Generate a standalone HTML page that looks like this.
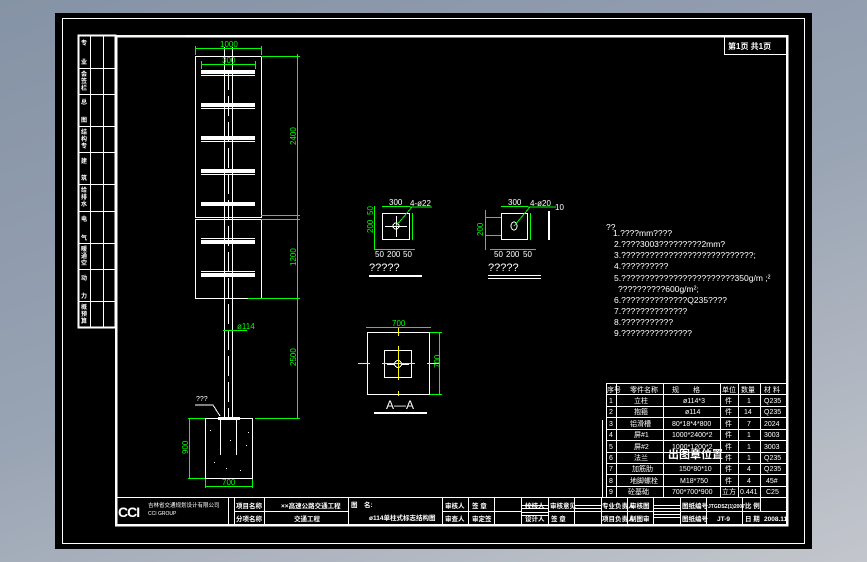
<!DOCTYPE html>
<html><head><meta charset="utf-8"><style>
html,body{margin:0;padding:0;width:867px;height:562px;overflow:hidden;background:linear-gradient(160deg,#8593a6 0%,#98a3b3 50%,#c3c6cc 100%);}
svg{position:absolute;left:0;top:0}
text{font-family:"Liberation Sans","Noto Sans CJK SC",sans-serif;fill:#fff}
.g{stroke:#00ff00;stroke-width:1;fill:none}
.gt{fill:#00ff00;font-size:8px}
.w{stroke:#fff;fill:none;stroke-width:1}
.wt{font-size:7px}
</style></head><body>
<svg width="867" height="562" viewBox="0 0 867 562" shape-rendering="crispEdges">
<rect x="55" y="13" width="757" height="536" fill="#000"/>
<rect x="62.5" y="18.5" width="742" height="525" class="w"/>
<!-- main thick frame -->
<rect x="116" y="36" width="671" height="489" fill="none" stroke="#fff" stroke-width="2.5"/>
<line x1="116" y1="36" x2="185" y2="36" stroke="#f5f0e0" stroke-width="1"/>
<!-- left strip -->
<g class="w">
<rect x="78.5" y="35.5" width="37" height="292" stroke-width="2"/>
<line x1="90.5" y1="35" x2="90.5" y2="328"/><line x1="103.5" y1="35" x2="103.5" y2="328"/>
<line x1="78" y1="68.5" x2="115" y2="68.5"/><line x1="78" y1="94.5" x2="115" y2="94.5"/>
<line x1="78" y1="126.5" x2="115" y2="126.5"/><line x1="78" y1="152.5" x2="115" y2="152.5"/>
<line x1="78" y1="184.5" x2="115" y2="184.5"/><line x1="78" y1="211.5" x2="115" y2="211.5"/>
<line x1="78" y1="243.5" x2="115" y2="243.5"/><line x1="78" y1="269.5" x2="115" y2="269.5"/>
<line x1="78" y1="301.5" x2="115" y2="301.5"/>
</g>
<g font-size="6" font-weight="bold">
<text x="81" y="45">专</text><text x="81" y="64">业</text>
<text x="81" y="76">会</text><text x="81" y="83">签</text><text x="81" y="90">栏</text>
<text x="81" y="104">总</text><text x="81" y="122">图</text>
<text x="81" y="134">结</text><text x="81" y="141">构</text><text x="81" y="148">专</text>
<text x="81" y="163">建</text><text x="81" y="180">筑</text>
<text x="81" y="192">给</text><text x="81" y="199">排</text><text x="81" y="206">水</text>
<text x="81" y="221">电</text><text x="81" y="240">气</text>
<text x="81" y="251">暖</text><text x="81" y="258">通</text><text x="81" y="265">空</text>
<text x="81" y="280">动</text><text x="81" y="298">力</text>
<text x="81" y="309">概</text><text x="81" y="316">预</text><text x="81" y="323">算</text>
</g>
<!-- page box -->
<rect x="724.5" y="36.5" width="62" height="18" class="w" stroke-width="1.5"/>
<text x="728" y="49" font-size="8" font-weight="bold">第1页 共1页</text>

<!-- sign panels -->
<g class="w">
<rect x="195.5" y="56.5" width="66" height="161"/>
<rect x="195.5" y="219.5" width="66" height="79"/>
<line x1="224.5" y1="47" x2="224.5" y2="420"/><line x1="232.5" y1="47" x2="232.5" y2="420"/>
<line x1="228.5" y1="70" x2="228.5" y2="420" stroke-dasharray="20,6"/>
</g>
<g fill="#fff">
<rect x="201" y="70" width="54" height="4"/><rect x="201" y="103" width="54" height="4"/>
<rect x="201" y="136" width="54" height="4"/><rect x="201" y="169" width="54" height="4"/>
<rect x="201" y="202" width="54" height="4"/>
<rect x="201" y="240" width="54" height="4"/><rect x="201" y="273" width="54" height="4"/>
</g>
<g class="w"><line x1="201" y1="75.5" x2="255" y2="75.5"/><line x1="201" y1="108.5" x2="255" y2="108.5"/><line x1="201" y1="141.5" x2="255" y2="141.5"/><line x1="201" y1="174.5" x2="255" y2="174.5"/><line x1="201" y1="238.5" x2="255" y2="238.5"/><line x1="201" y1="271.5" x2="255" y2="271.5"/></g>
<!-- dims on pole -->
<g class="g">
<line x1="195" y1="48.5" x2="262" y2="48.5"/><line x1="195.5" y1="46" x2="195.5" y2="55"/><line x1="261.5" y1="46" x2="261.5" y2="55"/>
<line x1="201" y1="64.5" x2="256" y2="64.5"/><line x1="201.5" y1="61" x2="201.5" y2="69"/><line x1="255.5" y1="61" x2="255.5" y2="69"/>
<line x1="261" y1="56.5" x2="300" y2="56.5"/>
<line x1="297.5" y1="54" x2="297.5" y2="419"/>
<line x1="261" y1="215.5" x2="300" y2="215.5"/><line x1="261" y1="219.5" x2="300" y2="219.5"/>
<line x1="248" y1="298.5" x2="300" y2="298.5"/>
<line x1="255" y1="418.5" x2="300" y2="418.5"/>
<line x1="223" y1="330.5" x2="247" y2="330.5"/>
</g>
<text class="gt" x="220" y="47">1000</text>
<text class="gt" x="222" y="63">300</text>
<text class="gt" x="237" y="329" font-size="7">ø114</text>
<text class="gt" transform="translate(296,145) rotate(-90)">2400</text>
<text class="gt" transform="translate(296,266) rotate(-90)">1200</text>
<text class="gt" transform="translate(296,366) rotate(-90)">2500</text>
<!-- foundation -->
<rect x="205.5" y="418.5" width="47" height="60" class="w"/>
<rect x="218" y="417" width="22" height="3" fill="#fff"/>
<g class="w"><line x1="220.5" y1="420" x2="220.5" y2="455"/><line x1="236.5" y1="420" x2="236.5" y2="455"/><polyline points="195,405 213,405 220,416"/></g>
<text x="196" y="401" font-size="7">???</text>
<g fill="#fff"><rect x="210" y="430" width="1" height="1"/><rect x="230" y="440" width="1" height="1"/><rect x="246" y="445" width="1" height="1"/><rect x="214" y="462" width="1" height="1"/><rect x="226" y="468" width="1" height="1"/><rect x="240" y="470" width="1" height="1"/><rect x="248" y="432" width="1" height="1"/></g>
<g class="g"><line x1="189.5" y1="418" x2="189.5" y2="479"/><line x1="188" y1="418.5" x2="205" y2="418.5"/><line x1="188" y1="478.5" x2="205" y2="478.5"/><line x1="205" y1="486.5" x2="253" y2="486.5"/><line x1="205.5" y1="479" x2="205.5" y2="488"/><line x1="252.5" y1="479" x2="252.5" y2="488"/></g>
<text class="gt" transform="translate(188,454) rotate(-90)" font-size="7">900</text>
<text class="gt" x="222" y="485" font-size="7">700</text>

<!-- plate 1 -->
<rect x="382.5" y="213.5" width="27" height="26" class="w"/>
<g class="w"><line x1="385" y1="226.5" x2="407" y2="226.5"/><line x1="396.5" y1="216" x2="396.5" y2="237"/></g>
<circle cx="396" cy="226" r="3" class="w"/>
<g class="g"><line x1="382" y1="206.5" x2="410" y2="206.5"/><line x1="374.5" y1="206" x2="374.5" y2="250"/><line x1="412.5" y1="213" x2="412.5" y2="240"/><line x1="374" y1="249.5" x2="415" y2="249.5"/><line x1="396" y1="226" x2="412" y2="207"/><line x1="410" y1="207" x2="432" y2="207"/></g>
<g class="gt" font-size="6"><text x="389" y="205">300</text><text x="410" y="206" fill="#fff">4-ø22</text><text x="375" y="257">50</text><text x="387" y="257">200</text><text x="403" y="257">50</text></g>
<text class="gt" transform="translate(373,215) rotate(-90)" font-size="6">50</text>
<text class="gt" transform="translate(373,233) rotate(-90)" font-size="6">200</text>
<text x="369" y="271" font-size="11">?????</text>
<rect x="369" y="275" width="53" height="2" fill="#fff"/>
<!-- plate 2 -->
<rect x="501.5" y="213.5" width="26" height="26" class="w"/>
<ellipse cx="514" cy="226" rx="3" ry="4" class="w"/>
<g class="g"><line x1="501" y1="206.5" x2="528" y2="206.5"/><line x1="485.5" y1="210" x2="485.5" y2="250"/><line x1="485" y1="217.5" x2="501" y2="217.5"/><line x1="485" y1="235.5" x2="501" y2="235.5"/><line x1="530.5" y1="213" x2="530.5" y2="240"/><line x1="490" y1="249.5" x2="536" y2="249.5"/><line x1="514" y1="226" x2="530" y2="207"/><line x1="528" y1="207" x2="556" y2="207"/></g>
<rect x="548" y="211" width="2" height="29" fill="#fff"/>
<g class="gt" font-size="6"><text x="508" y="205">300</text><text x="530" y="206" fill="#fff">4-ø20</text><text x="555" y="210">10</text><text x="494" y="257">50</text><text x="506" y="257">200</text><text x="523" y="257">50</text></g>
<text class="gt" transform="translate(483,236) rotate(-90)" font-size="6">200</text>
<text x="488" y="271" font-size="11">?????</text>
<rect x="488" y="275" width="53" height="1" fill="#fff"/><rect x="488" y="278" width="53" height="1" fill="#fff"/>

<!-- A-A section -->
<rect x="367.5" y="332.5" width="62" height="62" class="w"/>
<rect x="384.5" y="350.5" width="27" height="27" class="w"/>
<circle cx="398" cy="364" r="3.5" class="w"/>
<g class="w"><line x1="387" y1="364.5" x2="394" y2="364.5"/><line x1="402" y1="364.5" x2="409" y2="364.5"/><line x1="398.5" y1="353" x2="398.5" y2="360"/><line x1="398.5" y1="368" x2="398.5" y2="375"/></g>
<g stroke="#ffff00"><line x1="358" y1="363.5" x2="370" y2="363.5"/><line x1="382" y1="363.5" x2="415" y2="363.5"/><line x1="427" y1="363.5" x2="440" y2="363.5"/><line x1="398.5" y1="328" x2="398.5" y2="336"/><line x1="398.5" y1="346" x2="398.5" y2="380"/><line x1="398.5" y1="391" x2="398.5" y2="396"/></g>
<g class="g"><line x1="366" y1="327.5" x2="431" y2="327.5"/><line x1="430" y1="332.5" x2="442" y2="332.5"/><line x1="430" y1="394.5" x2="442" y2="394.5"/><line x1="439.5" y1="332" x2="439.5" y2="395"/></g>
<text class="gt" x="392" y="326" font-size="7">700</text>
<text class="gt" transform="translate(440,368) rotate(-90)" font-size="7">700</text>
<text x="386" y="409" font-size="12">A—A</text>
<rect x="374" y="412" width="53" height="2" fill="#fff"/>

<!-- notes -->
<g font-size="8.5" font-family="Liberation Sans,sans-serif">
<text x="606" y="230">??</text>
<text x="613" y="236">1.????mm????</text>
<text x="614" y="247">2.????3003?????????2mm?</text>
<text x="614" y="258">3.????????????????????????????;</text>
<text x="614" y="269">4.??????????</text>
<text x="614" y="281">5.????????????????????????350g/m ;²</text>
<text x="618" y="292">??????????600g/m²;</text>
<text x="614" y="303">6.??????????????Q235????</text>
<text x="614" y="314">7.??????????????</text>
<text x="614" y="325">8.???????????</text>
<text x="614" y="336">9.???????????????</text>
</g>

<!-- materials table -->
<g class="w">
<rect x="606.5" y="383.5" width="180" height="114"/>
<line x1="616.5" y1="383" x2="616.5" y2="497"/><line x1="663.5" y1="383" x2="663.5" y2="497"/>
<line x1="720.5" y1="383" x2="720.5" y2="497"/><line x1="738.5" y1="383" x2="738.5" y2="497"/>
<line x1="760.5" y1="383" x2="760.5" y2="497"/>
<line x1="606" y1="394.5" x2="787" y2="394.5"/><line x1="606" y1="406.5" x2="787" y2="406.5"/>
<line x1="606" y1="417.5" x2="787" y2="417.5"/><line x1="606" y1="429.5" x2="787" y2="429.5"/>
<line x1="606" y1="440.5" x2="787" y2="440.5"/><line x1="606" y1="452.5" x2="787" y2="452.5"/>
<line x1="606" y1="463.5" x2="787" y2="463.5"/><line x1="606" y1="474.5" x2="787" y2="474.5"/>
<line x1="606" y1="486.5" x2="787" y2="486.5"/>
<line x1="602.5" y1="420" x2="602.5" y2="497"/>
</g>
<g font-size="7">
<text x="607" y="392">序号</text><text x="630" y="392">零件名称</text><text x="672" y="392">规　　格</text><text x="722" y="392">单位</text><text x="741" y="392">数量</text><text x="764" y="392">材 料</text>
<text x="609" y="403">1</text><text x="634" y="403">立柱</text><text x="683" y="403">ø114*3</text><text x="725" y="403">件</text><text x="747" y="403">1</text><text x="764" y="403">Q235</text>
<text x="609" y="414">2</text><text x="634" y="414">抱箍</text><text x="685" y="414">ø114</text><text x="725" y="414">件</text><text x="744" y="414">14</text><text x="764" y="414">Q235</text>
<text x="609" y="426">3</text><text x="630" y="426">铝滑槽</text><text x="672" y="426">80*18*4*800</text><text x="725" y="426">件</text><text x="747" y="426">7</text><text x="764" y="426">2024</text>
<text x="609" y="437">4</text><text x="634" y="437">屏#1</text><text x="672" y="437">1000*2400*2</text><text x="725" y="437">件</text><text x="747" y="437">1</text><text x="764" y="437">3003</text>
<text x="609" y="449">5</text><text x="634" y="449">屏#2</text><text x="672" y="449">1000*1200*2</text><text x="725" y="449">件</text><text x="747" y="449">1</text><text x="764" y="449">3003</text>
<text x="609" y="460">6</text><text x="634" y="460">法兰</text><text x="725" y="460">件</text><text x="747" y="460">1</text><text x="764" y="460">Q235</text>
<text x="609" y="471">7</text><text x="632" y="471">加筋肋</text><text x="679" y="471">150*80*10</text><text x="725" y="471">件</text><text x="747" y="471">4</text><text x="764" y="471">Q235</text>
<text x="609" y="483">8</text><text x="630" y="483">地脚螺栓</text><text x="680" y="483">M18*750</text><text x="725" y="483">件</text><text x="747" y="483">4</text><text x="766" y="483">45#</text>
<text x="609" y="494">9</text><text x="628" y="494">砼基础</text><text x="672" y="494">700*700*900</text><text x="722" y="494">立方</text><text x="740" y="494">0.441</text><text x="766" y="494">C25</text>
</g>
<text x="668" y="458" font-size="11" font-weight="bold">出图章位置</text>

<!-- title block -->
<g class="w">
<line x1="116" y1="497.5" x2="787" y2="497.5"/>
<line x1="234" y1="511.5" x2="348" y2="511.5"/>
<line x1="442" y1="511.5" x2="521" y2="511.5"/><line x1="548" y1="511.5" x2="787" y2="511.5"/>
<line x1="521" y1="505.5" x2="548" y2="505.5"/><line x1="521" y1="508.5" x2="548" y2="508.5"/>
<line x1="521" y1="512.5" x2="548" y2="512.5"/><line x1="521" y1="515.5" x2="548" y2="515.5"/>
<line x1="574" y1="505.5" x2="601" y2="505.5"/><line x1="574" y1="508.5" x2="601" y2="508.5"/>
<line x1="654" y1="505.5" x2="680" y2="505.5"/><line x1="654" y1="508.5" x2="680" y2="508.5"/>
<line x1="654" y1="514.5" x2="680" y2="514.5"/><line x1="654" y1="517.5" x2="680" y2="517.5"/>
<line x1="234.5" y1="497" x2="234.5" y2="525"/><line x1="264.5" y1="497" x2="264.5" y2="525"/>
<line x1="348.5" y1="497" x2="348.5" y2="525"/><line x1="442.5" y1="497" x2="442.5" y2="525"/>
<line x1="468.5" y1="497" x2="468.5" y2="525"/><line x1="494.5" y1="497" x2="494.5" y2="525"/>
<line x1="521.5" y1="497" x2="521.5" y2="525"/><line x1="548.5" y1="497" x2="548.5" y2="525"/>
<line x1="574.5" y1="497" x2="574.5" y2="525"/><line x1="601.5" y1="497" x2="601.5" y2="525"/>
<line x1="627.5" y1="497" x2="627.5" y2="525"/><line x1="653.5" y1="497" x2="653.5" y2="525"/>
<line x1="680.5" y1="497" x2="680.5" y2="525"/><line x1="706.5" y1="497" x2="706.5" y2="525"/>
<line x1="742.5" y1="497" x2="742.5" y2="525"/><line x1="760.5" y1="497" x2="760.5" y2="511"/>
<line x1="228.5" y1="497" x2="228.5" y2="525"/>
</g>
<text x="118" y="517" font-size="14" font-weight="bold" letter-spacing="-1">CCI</text>
<text x="148" y="507" font-size="5.5">吉林省交通规划设计有限公司</text>
<text x="148" y="515" font-size="5">CCI GROUP</text>
<g font-size="6.5" font-weight="bold">
<text x="236" y="508">项目名称</text><text x="236" y="521">分项名称</text>
<text x="281" y="508">××高速公路交通工程</text><text x="294" y="521">交通工程</text>
<text x="351" y="507">图　名:</text><text x="369" y="520">ø114单柱式标志结构图</text>
<text x="445" y="508">审核人</text><text x="472" y="508">签 章</text><text x="525" y="508">校核人</text><text x="550" y="508">审核意见</text>
<text x="445" y="521">审查人</text><text x="472" y="521">审定签</text><text x="525" y="521">设计人</text><text x="551" y="521">签 章</text>
<text x="602" y="508">专业负责人</text><text x="630" y="508">审核图</text><text x="682" y="508">图纸编号</text><text x="708" y="508" font-size="5">JTGDSZ(1)2007</text><text x="745" y="508">比 例</text>
<text x="602" y="521">项目负责人</text><text x="630" y="521">制图审</text><text x="682" y="521">图纸编号</text><text x="717" y="521">JT-9</text><text x="745" y="521">日 期</text><text x="764" y="521">2008.11</text>
</g>
</svg>
</body></html>
